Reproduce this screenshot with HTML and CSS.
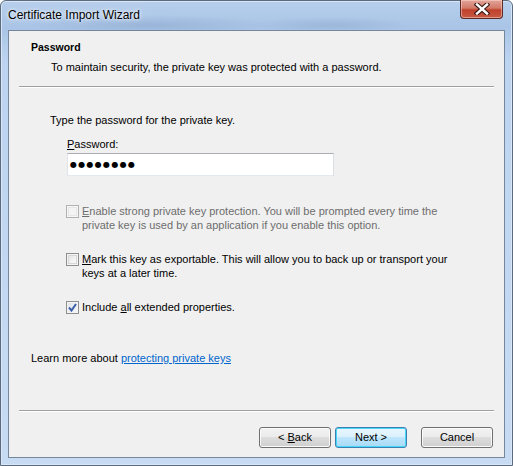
FILE: index.html
```html
<!DOCTYPE html>
<html>
<head>
<meta charset="utf-8">
<link rel="stylesheet" href="styles.css">
</head>
<body>
<div class="window">
  <div class="titlebar">
    <span class="title">Certificate Import Wizard</span>
    <div class="close" aria-label="Close">
      <svg width="16" height="12" viewBox="0 0 16 12">
        <path d="M3 1.5 L13 10.5 M13 1.5 L3 10.5" stroke="#3a1a18" stroke-width="4.6" stroke-linecap="square"/>
        <path d="M3 1.5 L13 10.5 M13 1.5 L3 10.5" stroke="#ffffff" stroke-width="2.4" stroke-linecap="square"/>
      </svg>
    </div>
  </div>
  <div class="client">
    <div class="header">
      <div class="h-title">Password</div>
      <div class="h-sub">To maintain security, the private key was protected with a password.</div>
    </div>
    <div class="sep"></div>
    <div class="body">
      <div class="intro">Type the password for the private key.</div>
      <div class="field">
        <div class="label"><u>P</u>assword:</div>
        <div class="input"><span class="dots">●●●●●●●●</span></div>
      </div>
      <div class="check disabled">
        <span class="box"></span>
        <span class="ctext"><u>E</u>nable strong private key protection. You will be prompted every time the private key is used by an application if you enable this option.</span>
      </div>
      <div class="check">
        <span class="box"></span>
        <span class="ctext"><u>M</u>ark this key as exportable. This will allow you to back up or transport your keys at a later time.</span>
      </div>
      <div class="check">
        <span class="box checked">
          <svg width="9" height="9" viewBox="0 0 9 9"><path d="M1 4.5 L3.5 7.5 L8 1" fill="none" stroke="#3a5fa8" stroke-width="2"/></svg>
        </span>
        <span class="ctext">Include <u>a</u>ll extended properties.</span>
      </div>
      <div class="learn">Learn more about <a class="link">protecting private keys</a></div>
    </div>
    <div class="sep"></div>
    <div class="buttons">
      <div class="btn"><span>&lt; <u>B</u>ack</span></div>
      <div class="btn default"><span>Next &gt;</span></div>
      <div class="btn cancel"><span>Cancel</span></div>
    </div>
  </div>
</div>
</body>
</html>
```
FILE: styles.css
```css
html, body {
  margin: 0;
  padding: 0;
}
body {
  width: 513px;
  height: 466px;
  overflow: hidden;
  font-family: "Liberation Sans", Arial, sans-serif;
  font-size: 11px;
  color: #000;
}
.window {
  width: 513px;
  height: 466px;
  box-sizing: border-box;
  display: flex;
  flex-direction: column;
  padding: 0 7px 7px 7px;
  border: 1px solid #5c6b7e;
  border-radius: 6px 6px 0 0;
  background:
    radial-gradient(ellipse 120px 10px at 150px 24px, rgba(120,150,190,0.35), transparent),
    radial-gradient(ellipse 80px 8px at 330px 24px, rgba(120,150,190,0.3), transparent),
    linear-gradient(180deg, #b7cfec 0px, #a9c4e6 26px, #bcd4f0 60px, #c7dbf3 100%);
  box-shadow: inset 0 0 0 1px #d8e6f7;
}
.titlebar {
  height: 29px;
  display: flex;
  align-items: flex-start;
}
.title {
  margin-top: 7px;
  font-size: 12px;
  line-height: 15px;
  color: #000;
  text-shadow: 0 0 6px rgba(255,255,255,0.9), 0 0 3px rgba(255,255,255,0.9);
}
.close {
  margin-left: auto;
  margin-right: 2px;
  margin-top: -1px;
  width: 43px;
  height: 19px;
  box-sizing: border-box;
  border: 1px solid #5a2b26;
  border-top: none;
  border-radius: 0 0 4px 4px;
  background: linear-gradient(180deg, #e3a59a 0%, #d27a68 45%, #c0412c 55%, #c85a43 100%);
  box-shadow: inset 0 0 0 1px rgba(255,220,210,0.5);
  display: flex;
  align-items: center;
  justify-content: center;
}
.client {
  flex: 1;
  display: flex;
  flex-direction: column;
  background: #f0f0f0;
  border: 1px solid #76869b;
}
.header {
  padding: 9px 0 11px 22px;
}
.h-title {
  font-weight: bold;
  font-size: 10.5px;
  line-height: 15px;
}
.h-sub {
  margin-top: 5px;
  padding-left: 20px;
  line-height: 15px;
}
.sep {
  margin: 0 10px;
  height: 1px;
  background: #a0a0a0;
  border-bottom: 1px solid #ffffff;
}
.body {
  flex: 1;
  padding: 25px 0 0 41px;
}
.intro {
  line-height: 15px;
}
.field {
  padding-left: 17px;
  margin-top: 9px;
}
.label {
  line-height: 15px;
}
.input {
  margin-top: 1px;
  width: 267px;
  height: 23px;
  box-sizing: border-box;
  background: #fff;
  border: 1px solid #abadb3;
  border-right-color: #dbdfe6;
  border-bottom-color: #e3e9ef;
  border-left-color: #e2e3ea;
  display: flex;
  align-items: center;
  padding-left: 2px;
}
.dots {
  font-family: "DejaVu Sans", sans-serif;
  font-size: 8px;
  letter-spacing: 1.3px;
}
.check {
  display: flex;
  align-items: flex-start;
  padding-left: 16px;
  width: 400px;
  margin-top: 20px;
}
.field + .check {
  margin-top: 28px;
}
.box {
  flex: none;
  width: 13px;
  height: 13px;
  box-sizing: border-box;
  margin-top: 1px;
  margin-right: 3px;
  border: 1px solid #8e8f8f;
  background: linear-gradient(135deg, #dcdcdc 0%, #f4f4f4 60%, #ffffff 100%);
  box-shadow: inset 0 0 0 1px #f4f4f4, inset 0 0 0 2px #d6d6d6;
  display: flex;
  align-items: center;
  justify-content: center;
}
.box.checked {
  background: linear-gradient(135deg, #e0e4ea 0%, #f6f7f9 100%);
  box-shadow: inset 0 0 0 1px #f4f4f4;
}
.disabled .box {
  border-color: #b1b1b1;
  background: #f4f4f4;
  box-shadow: inset 0 0 0 1px #f7f7f7, inset 0 0 0 2px #e6e6e6;
}
.disabled .ctext {
  color: #6d6d6d;
}
.ctext {
  line-height: 14px;
}
.learn {
  margin-top: 37px;
  margin-left: -19px;
  line-height: 15px;
}
.link {
  color: #0066cc;
  text-decoration: underline;
}
.buttons {
  display: flex;
  padding: 15px 11px 9px 0;
  justify-content: flex-end;
}
.btn {
  width: 72px;
  height: 21px;
  box-sizing: border-box;
  border: 1px solid #707070;
  border-radius: 3px;
  background: linear-gradient(180deg, #f2f2f2 0%, #ebebeb 49%, #dddddd 50%, #cfcfcf 100%);
  box-shadow: inset 0 0 0 1px #fbfbfb;
  display: flex;
  align-items: center;
  justify-content: center;
  line-height: 15px;
  margin-left: 4px;
}
.btn.default {
  border-color: #3c7fb1;
  background: linear-gradient(180deg, #eaf6fd 0%, #d9f0fc 49%, #bee6fd 50%, #a7d9f5 100%);
  box-shadow: inset 0 0 0 1px #48d6fb;
}
.btn.cancel {
  margin-left: 14px;
}
u {
  text-decoration: underline;
}
```
